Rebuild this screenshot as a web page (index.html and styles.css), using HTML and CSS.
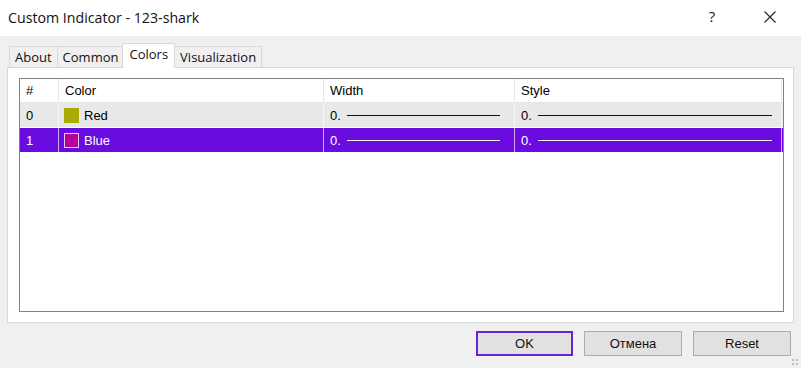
FILE: index.html
```html
<!DOCTYPE html>
<html lang="en">
<head>
    <meta charset="UTF-8">
    <title>Custom Indicator - 123-shark</title>
    <link rel="stylesheet" href="styles.css">
</head>
<body>
    <div class="window">
        <div class="titlebar">
            <span class="title">Custom Indicator - 123-shark</span>
            <span class="tb-btn help">?</span>
            <span class="tb-btn close">
                <svg width="12" height="12" viewBox="0 0 12 12"><path d="M0.5 0.5 L11.5 11.5 M11.5 0.5 L0.5 11.5" stroke="#222" stroke-width="1.1" fill="none"/></svg>
            </span>
        </div>

        <div class="body">
            <div class="tabs">
                <div class="tab">About</div>
                <div class="tab">Common</div>
                <div class="tab active">Colors</div>
                <div class="tab">Visualization</div>
            </div>

            <div class="panel">
                <div class="list">
                    <div class="row head">
                        <div class="cell c-num">#</div>
                        <div class="cell c-color">Color</div>
                        <div class="cell c-width">Width</div>
                        <div class="cell c-style">Style</div>
                    </div>
                    <div class="row item">
                        <div class="cell c-num">0</div>
                        <div class="cell c-color"><span class="swatch red"></span>Red</div>
                        <div class="cell c-width">0. <span class="line"></span></div>
                        <div class="cell c-style">0. <span class="line"></span></div>
                    </div>
                    <div class="row item selected">
                        <div class="cell c-num">1</div>
                        <div class="cell c-color"><span class="swatch blue"></span>Blue</div>
                        <div class="cell c-width">0. <span class="line"></span></div>
                        <div class="cell c-style">0. <span class="line"></span></div>
                    </div>
                </div>
            </div>

            <div class="buttons">
                <button class="btn default">OK</button>
                <button class="btn">Отмена</button>
                <button class="btn">Reset</button>
            </div>
            <div class="grip"></div>
        </div>
    </div>
</body>
</html>
```

FILE: styles.css
```css
body { margin: 0; background: #f0f0f0; font-family: "Liberation Sans", Arial, sans-serif; }
.window { width: 801px; height: 368px; position: relative; overflow: hidden; }

.titlebar { height: 36px; background: white; display: flex; align-items: center; }
.title { font-family: "Open Sans", "Noto Sans", sans-serif; font-size: 14.2px; color: #111; padding-left: 8px; flex: 1; margin-top: -2px; }
.tb-btn { width: 46px; display: flex; justify-content: center; align-items: center; }
.help { font-family: "Open Sans", sans-serif; font-size: 15px; color: #222; margin-right: 12px; margin-top: -4px; }
.close { margin-right: 8px; margin-top: -2px; }

.body { padding-top: 7px; }
.tabs { display: flex; align-items: flex-end; height: 24px; padding-left: 9px; position: relative; z-index: 1; }
.tab { font-family: "Open Sans", "Noto Sans", sans-serif; font-size: 13px; color: #111; height: 20px; line-height: 20px; padding: 0 5px; border: 1px solid #d9d9d9; border-bottom: none; margin-right: -1px; background: #f0f0f0; }
.tab.active { background: white; height: 24px; line-height: 20px; margin: 0 -1px 0 -1px; position: relative; top: 1px; padding: 0 6px; }

.panel { margin: 0 7px 0 7px; height: 234px; background: white; border: 1px solid #d9d9d9; padding: 10px 9px 10px 11px; }
.list { height: 232px; border: 1px solid #828282; font-size: 13px; }

.row { display: flex; height: 24px; }
.row.head { height: 23px; border-bottom: 1px solid #e5e5e5; background: white; }
.row.item { background: #e8e8e8; border-bottom: 1px solid white; }
.row.selected { background: #6a0bdf; color: white; }

.cell { display: flex; align-items: center; padding-left: 6px; box-sizing: border-box; border-right: 1px solid #f7f7f7; white-space: nowrap; }
.head .cell { border-right-color: #e5e5e5; }
.selected .cell { border-right-color: #c9a8f5; }
.c-num { width: 39px; }
.c-color { width: 265px; }
.c-width { width: 191px; }
.c-style { width: 267px; }

.swatch { width: 13px; height: 13px; border: 1px solid #808080; margin-right: 5px; margin-left: -1px; }
.swatch.red { background: #a8ab00; border-color: #a8ab00; }
.swatch.blue { background: #b8009a; border-color: #e8c8f0; }

.line { flex: 1; height: 1px; background: #111; margin: 1px 14px 0 6px; }
.selected .line { background: white; }
.c-style .line { margin-right: 9px; }

.buttons { display: flex; justify-content: flex-end; gap: 11px; padding: 8px 10px 0 0; }
.btn { width: 98px; height: 25px; font-family: "Liberation Sans", Arial, sans-serif; font-size: 13px; color: #111; background: #e1e1e1; border: 1px solid #adadad; padding: 0; }
.btn.default { width: 97px; border: 2px solid #6a22d8; }

.grip { position: absolute; right: 2px; bottom: 2px; width: 8px; height: 8px; background: radial-gradient(circle, #bdbdbd 1px, transparent 1.2px) 0 0 / 4px 4px; }
```
